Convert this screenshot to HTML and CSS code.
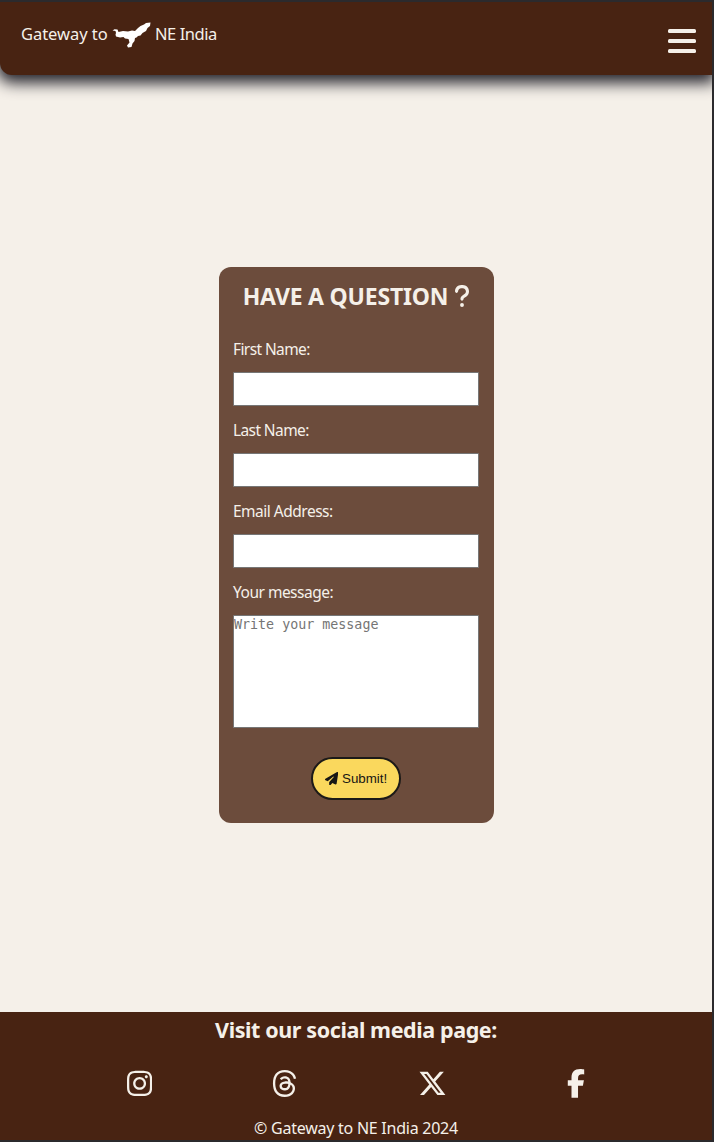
FILE: index.html
```html
<!DOCTYPE html>
<html lang="en">
<head>
<meta charset="utf-8">
<title>Gateway to NE India</title>
<link rel="stylesheet" href="styles.css">
</head>
<body>
<div class="page">
  <header class="header">
    <div class="brand">
      <span class="brand-start">Gateway to</span>
      <svg class="brand-map" viewBox="0 0 39 26"><path d="M0.500 8.500L2.500 7.300l3 .2 1 2.500L11 9l5 .5 4-1 3 .5L26 6l2.500-2L32 2.500l2-1.500 4.500-.5L38 4l-2.500 2-1.500 3-3.500 2-2 2.500-2.500.5-1.500 1.500-1.500.5-.5 3-2 2.500-1 3.500-3.500.5-1-2 2.500-3-1-3.500-3.500-.5-1.500-1.500-3.500.5-4-1-.5-2 .5-1.500L3.500 9z"/></svg>
      <span class="brand-end">NE India</span>
    </div>
    <svg class="menu" viewBox="0 0 28 24"><rect width="28" height="4" rx="1.500"/><rect y="10" width="28" height="4" rx="1.500"/><rect y="20" width="28" height="4" rx="1.500"/></svg>
  </header>
  <main class="main">
    <form class="card">
      <h1 class="title"><span class="title-text">HAVE A QUESTION</span>
        <svg class="question" viewBox="16 32 288 448"><path d="M80 160c0-35.300 28.700-64 64-64h32c35.300 0 64 28.700 64 64v3.600c0 21.800-11.100 42.100-29.400 53.800l-42.200 27.100c-25.200 16.200-40.400 44.100-40.400 74V320c0 17.700 14.300 32 32 32s32-14.300 32-32v-1.400c0-8.200 4.200-15.800 11-20.200l42.200-27.100c36.600-23.600 58.800-64.100 58.800-107.700V160c0-70.700-57.300-128-128-128H144C73.300 32 16 89.300 16 160c0 17.700 14.300 32 32 32s32-14.300 32-32zm80 320a40 40 0 1 0 0-80 40 40 0 1 0 0 80z"/></svg>
      </h1>
      <label class="label l-short" for="first">First Name:</label>
      <input class="field" id="first" type="text">
      <label class="label l-short" for="last">Last Name:</label>
      <input class="field" id="last" type="text">
      <label class="label" for="email">Email Address:</label>
      <input class="field" id="email" type="text">
      <label class="label" for="message">Your message:</label>
      <textarea class="field message" id="message" placeholder="Write your message"></textarea>
      <button class="submit" type="button">
        <svg class="plane" viewBox="0 0 512 512"><path d="M498.100 5.600c10.100 7 15.400 19.100 13.500 31.200l-64 416c-1.500 9.700-7.400 18.200-16 23s-18.900 5.400-28 1.600L284 427.700l-68.500 74.100c-8.900 9.700-22.900 12.900-35.200 8.100S160 493.200 160 480V396.400c0-4 1.500-7.800 4.200-10.700L331.800 202.800c5.800-6.300 5.600-16-.4-22s-15.700-6.400-22-.7L106 360.800 17.700 316.600C7.100 311.300 .3 300.700 0 288.900s5.900-22.800 16.100-28.700l448-256c10.700-6.100 23.900-5.500 34 1.400z"/></svg>
        <span>Submit!</span>
      </button>
    </form>
  </main>
  <footer class="footer">
    <h2 class="social-title">Visit our social media page:</h2>
    <nav class="social">
      <svg viewBox="0 0 448 512" width="25.200"><path d="M224.100 141c-63.600 0-114.900 51.300-114.900 114.900s51.300 114.900 114.900 114.900S339 319.500 339 255.900 287.700 141 224.100 141zm0 189.600c-41.100 0-74.700-33.500-74.700-74.700s33.500-74.700 74.700-74.700 74.700 33.500 74.700 74.700-33.600 74.700-74.700 74.700zm146.400-194.300c0 14.900-12 26.800-26.800 26.800-14.900 0-26.800-12-26.800-26.800s12-26.800 26.800-26.800 26.800 12 26.800 26.800zm76.100 27.200c-1.700-35.900-9.900-67.700-36.200-93.900-26.200-26.200-58-34.400-93.900-36.200-37-2.100-147.900-2.100-184.900 0-35.800 1.700-67.600 9.900-93.900 36.100s-34.400 58-36.200 93.900c-2.100 37-2.100 147.900 0 184.900 1.700 35.900 9.900 67.700 36.200 93.900s58 34.400 93.900 36.200c37 2.100 147.900 2.100 184.900 0 35.900-1.700 67.700-9.900 93.900-36.200 26.200-26.200 34.400-58 36.200-93.900 2.100-37 2.100-147.800 0-184.800zM398.800 388c-7.800 19.600-22.900 34.700-42.600 42.600-29.500 11.700-99.500 9-132.100 9s-102.700 2.600-132.100-9c-19.600-7.800-34.700-22.900-42.600-42.600-11.700-29.500-9-99.500-9-132.100s-2.600-102.700 9-132.100c7.800-19.600 22.900-34.700 42.600-42.600 29.500-11.700 99.500-9 132.100-9s102.700-2.600 132.100 9c19.600 7.800 34.700 22.900 42.600 42.600 11.700 29.500 9 99.500 9 132.100s2.700 102.700-9 132.100z"/></svg>
      <svg viewBox="0 0 448 512" width="25.200"><path d="M331.500 235.700c2.200 .9 4.200 1.900 6.300 2.800c29.200 14.100 50.600 35.200 61.800 61.400c15.700 36.500 17.200 95.800-30.300 143.200c-36.200 36.200-80.300 52.500-142.600 53h-.3c-70.200-.5-124.100-24.100-160.400-70.200c-32.300-41-48.900-98.100-49.500-169.600V256v-.2C17 184.300 33.600 127.200 65.900 86.200C102.200 40.100 156.200 16.500 226.400 16h.3c70.300 .5 124.900 24 162.300 69.900c18.400 22.700 32 50 40.600 81.700l-40.400 10.800c-7.100-25.800-17.800-47.800-32.200-65.400c-29.200-35.800-73-54.200-130.500-54.600c-57 .5-100.100 18.800-128.200 54.400C72.100 146.100 58.500 194.300 58 256c.5 61.700 14.100 109.900 40.300 143.300c28 35.600 71.200 53.900 128.200 54.400c51.400-.4 85.400-12.600 113.700-40.900c32.300-32.200 31.700-71.800 21.400-95.900c-6.100-14.200-17.100-26-31.900-34.900c-3.700 26.900-11.800 48.300-24.700 64.800c-17.100 21.800-41.400 33.600-72.700 35.300c-23.600 1.300-46.300-4.400-63.900-16c-20.800-13.800-33-34.800-34.300-59.300c-2.500-48.300 35.700-83 95.200-86.400c21.100-1.200 40.900-.3 59.200 2.800c-2.400-14.800-7.300-26.600-14.600-35.200c-10-11.700-25.600-17.700-46.200-17.800H227c-16.600 0-39 4.600-53.300 26.300l-34.400-23.600c19.200-29.100 50.300-45.100 87.800-45.100h.8c62.600 .4 99.900 39.500 103.700 107.700l-.2 .2zm-156 68.800c1.300 25.100 28.400 36.800 54.600 35.300c25.600-1.400 54.600-11.400 59.500-73.200c-13.200-2.900-27.800-4.400-43.400-4.400c-4.800 0-9.600 .1-14.400 .4c-42.900 2.400-57.200 23.200-56.200 41.800l-.1 .1z"/></svg>
      <svg viewBox="0 0 512 512" width="28.800"><path d="M389.200 48h70.600L305.600 224.200 487 464H345L233.700 318.600 106.500 464H35.800L200.700 275.500 26.800 48H172.400L272.900 180.900 389.200 48zM364.400 421.800h39.100L151.100 88h-42L364.400 421.800z"/></svg>
      <svg viewBox="0 0 320 512" width="18"><path d="M80 299.300V512H196V299.300h86.500l18-97.800H196V166.900c0-51.700 20.300-71.500 72.700-71.500c16.300 0 29.400 .4 37 1.200V7.900C291.400 4 256.400 0 236.200 0C129.300 0 80 50.500 80 159.400v42.100H14v97.800H80z"/></svg>
    </nav>
    <p class="copyright">© Gateway to NE India 2024</p>
  </footer>
</div>
</body>
</html>
```
FILE: styles.css
```css
* { box-sizing: border-box; }
body {
  margin: 0;
  height: 1142px;
  padding: 2px 2px 2px 0;
  background: #2b2a2d;
  color: #f5f0e9;
  font-family: "Noto Sans", sans-serif;
  overflow: hidden;
}
svg { display: block; flex: none; fill: currentColor; }
.page {
  display: flex;
  flex-direction: column;
  height: 1138px;
  background: #f5f0e9;
  overflow: hidden;
}
.header {
  display: flex;
  justify-content: space-between;
  align-items: flex-start;
  flex: none;
  height: 73px;
  padding: 20px 16px 0 21px;
  background: #482312;
  border-radius: 0 0 0 12px;
  box-shadow: 0 5px 15px 3px #25242c;
}
.brand { display: flex; font-size: 16.500px; line-height: 24px; white-space: nowrap; }
.brand-start { width: 91px; letter-spacing: -0.050px; }
.brand-end { letter-spacing: -0.450px; }
.brand-map { width: 39px; height: 26px; margin-right: 4px; color: #fff; }
.menu { width: 28px; height: 24px; margin-top: 7px; }
.main { flex: 1; display: flex; justify-content: center; align-items: flex-start; padding-top: 192px; }
.card {
  display: flex;
  flex-direction: column;
  width: 275px;
  height: 555.500px;
  padding: 14px 14.500px 0;
  background: #6c4c3c;
  border-radius: 12px;
}
.title {
  display: flex;
  justify-content: center;
  gap: 7px;
  margin: 0 0 38px;
  font-size: 23px;
  line-height: 30px;
  white-space: nowrap;
}
.title-text { letter-spacing: -0.200px; }
.question { width: 14px; height: 22px; margin-top: 4px; }
.label {
  margin: -12px 0 11px;
  font-size: 15.500px;
  line-height: 24px;
  letter-spacing: -0.500px;
  white-space: nowrap;
}
.l-short { letter-spacing: -0.600px; }
.field {
  display: block;
  width: 246px;
  height: 34px;
  margin: 0 0 24px;
  padding: 0;
  border: 1px solid #767676;
  border-radius: 1px;
  background: #fff;
}
.message {
  height: 113px;
  margin-bottom: 29px;
  padding-top: 1px;
  resize: none;
  font: 13.333px/16px "DejaVu Sans Mono", monospace;
  overflow: hidden;
}
.message::placeholder { color: #757575; }
.submit {
  display: flex;
  align-items: center;
  justify-content: center;
  align-self: center;
  gap: 4px;
  width: 90px;
  height: 43px;
  padding: 0;
  border: 2px solid #1c1a18;
  border-radius: 22px;
  background: #fad85d;
  color: #171614;
  font: 13.333px "Liberation Sans", sans-serif;
}
.plane { width: 13.300px; height: 13.300px; }
.footer { flex: none; height: 128px; background: #482312; text-align: center; }
.social-title { margin: 3px 0 24px; font-size: 21.500px; line-height: 30px; letter-spacing: -0.400px; }
.social { display: flex; justify-content: center; gap: 120.500px; height: 28.800px; }
.social svg { height: 28.800px; }
.copyright { margin: 18px 0 0; font-size: 16px; line-height: 24px; letter-spacing: -0.250px; }
```
